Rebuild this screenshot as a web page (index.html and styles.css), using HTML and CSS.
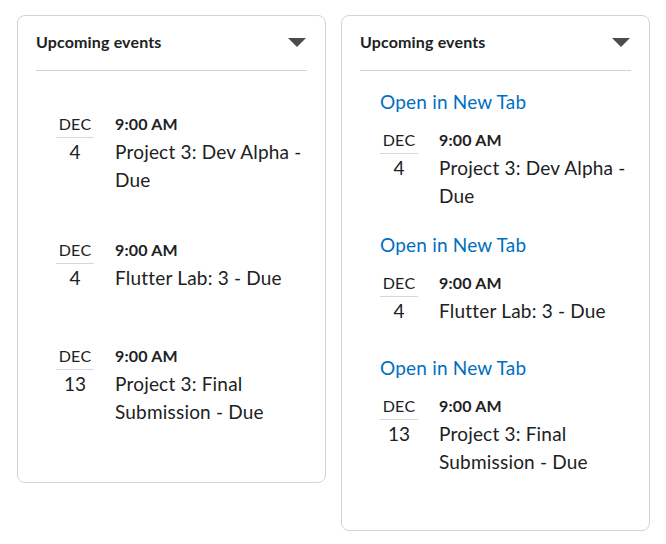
FILE: index.html
```html
<!DOCTYPE html>
<html>
<head>
<meta charset="utf-8">
<link rel="stylesheet" href="styles.css">
</head>
<body>
<div class="page">
  <section class="card">
    <header class="card-head">
      <h2 class="card-title">Upcoming events</h2>
      <span class="caret"></span>
    </header>
    <div class="list list-plain">
      <div class="event">
        <div class="date"><div class="month">DEC</div><div class="day">4</div></div>
        <div class="info"><div class="time">9:00 AM</div><div class="title">Project 3: Dev Alpha - Due</div></div>
      </div>
      <div class="event">
        <div class="date"><div class="month">DEC</div><div class="day">4</div></div>
        <div class="info"><div class="time">9:00 AM</div><div class="title">Flutter Lab: 3 - Due</div></div>
      </div>
      <div class="event">
        <div class="date"><div class="month">DEC</div><div class="day">13</div></div>
        <div class="info"><div class="time">9:00 AM</div><div class="title">Project 3: Final Submission - Due</div></div>
      </div>
    </div>
  </section>
  <section class="card">
    <header class="card-head">
      <h2 class="card-title">Upcoming events</h2>
      <span class="caret"></span>
    </header>
    <div class="list list-links">
      <div class="block">
        <a class="open" href="#">Open in New Tab</a>
        <div class="event">
          <div class="date"><div class="month">DEC</div><div class="day">4</div></div>
          <div class="info"><div class="time">9:00 AM</div><div class="title">Project 3: Dev Alpha - Due</div></div>
        </div>
      </div>
      <div class="block">
        <a class="open" href="#">Open in New Tab</a>
        <div class="event">
          <div class="date"><div class="month">DEC</div><div class="day">4</div></div>
          <div class="info"><div class="time">9:00 AM</div><div class="title">Flutter Lab: 3 - Due</div></div>
        </div>
      </div>
      <div class="block">
        <a class="open" href="#">Open in New Tab</a>
        <div class="event">
          <div class="date"><div class="month">DEC</div><div class="day">13</div></div>
          <div class="info"><div class="time">9:00 AM</div><div class="title">Project 3: Final Submission - Due</div></div>
        </div>
      </div>
    </div>
  </section>
</div>
</body>
</html>
```
FILE: styles.css
```css
* { box-sizing: border-box; }
html, body { margin: 0; padding: 0; background: #ffffff; }
body {
  font-family: Lato, "Open Sans", sans-serif;
  color: #202122;
  padding: 15px 0 0 17px;
}
.page {
  display: flex;
  align-items: flex-start;
  gap: 15px;
}
.card {
  width: 309px;
  border: 1px solid #cdd5dc;
  border-radius: 8px;
  padding: 0 18px;
  background: #fff;
}
.card-head {
  height: 55px;
  border-bottom: 1px solid #cdd5dc;
  display: flex;
  align-items: center;
  justify-content: space-between;
  padding-bottom: 2px;
}
.card-title {
  margin: 0;
  font-size: 16px;
  font-weight: 700;
  line-height: 20px;
  letter-spacing: 0.15px;
}
.caret {
  width: 0;
  height: 0;
  border-left: 9px solid transparent;
  border-right: 9px solid transparent;
  border-top: 9px solid #494c4e;
  margin-right: 1px;
}
.list { padding-left: 20px; }
.list-plain { padding-top: 39px; padding-bottom: 14px; }
.list-plain .event { margin-bottom: 42px; }
.list-links { padding-top: 17px; padding-bottom: 33px; }
.block { margin-bottom: 21px; }
.open {
  display: block;
  color: #006fbf;
  text-decoration: none;
  font-size: 19px;
  line-height: 28px;
  letter-spacing: 0.2px;
  margin-bottom: 10px;
}
.event {
  display: flex;
  gap: 21px;
  min-height: 64px;
}
.date {
  width: 38px;
  flex: none;
  text-align: center;
}
.month {
  font-size: 16px;
  line-height: 27px;
  letter-spacing: 0.3px;
  border-bottom: 1px solid #d3d9e3;
}
.day {
  font-size: 19px;
  line-height: 27px;
}
.info { flex: 1; min-width: 0; }
.time {
  font-size: 16px;
  font-weight: 700;
  line-height: 28px;
  letter-spacing: 0.2px;
}
.title {
  font-size: 19px;
  line-height: 28px;
  letter-spacing: 0.2px;
  padding-right: 4px;
}
```
